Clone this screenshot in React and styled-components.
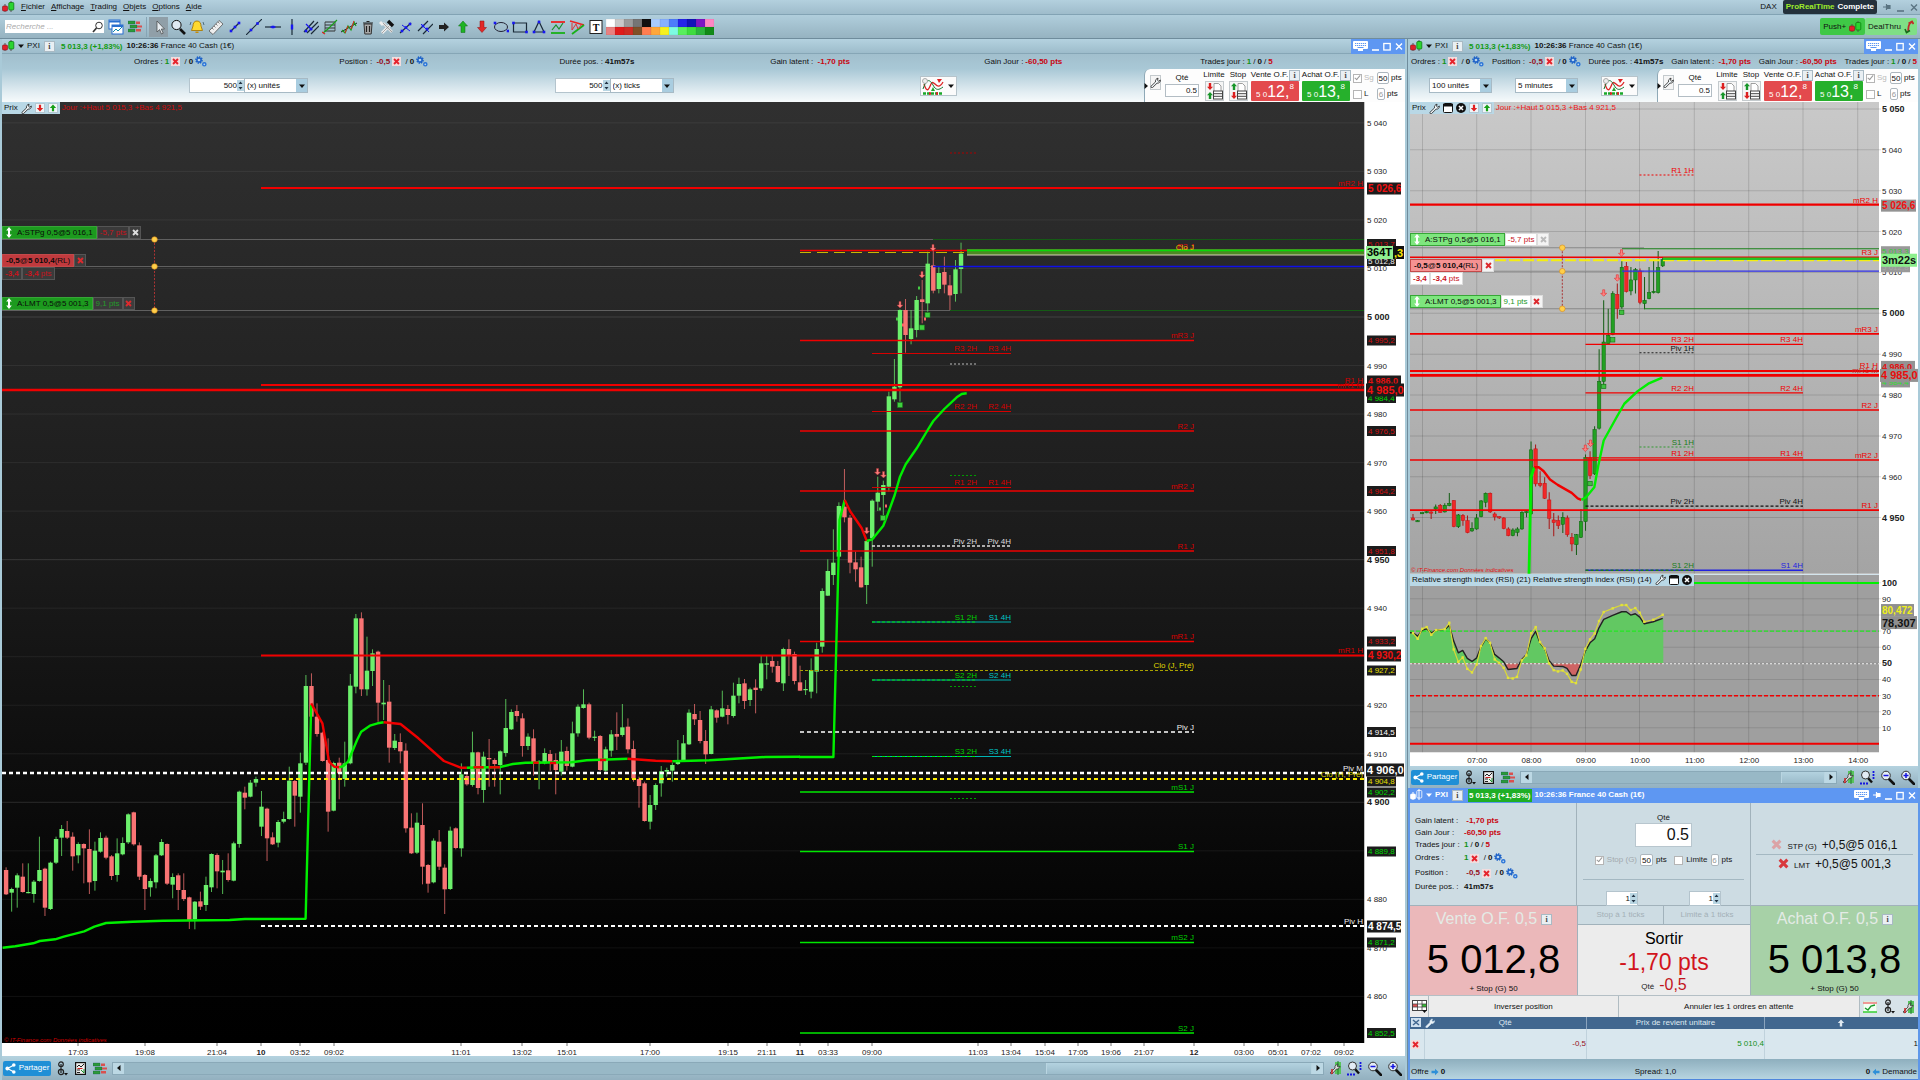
import React from "react";
import styled, { createGlobalStyle, css } from "styled-components";

const Global = createGlobalStyle`
  *, *::before, *::after { box-sizing: border-box; }
  html, body { margin: 0; padding: 0; }
  body { background: #a3c0ce; color: #111; font: 8px/10px "Liberation Sans", Arial, sans-serif; overflow: hidden; }
  button, input, select { font: inherit; color: inherit; margin: 0; padding: 0; border: 0; border-radius: 0; background: none; outline: 0; }
  button { cursor: pointer; }
  svg { display: block; flex: none; }
  b { font-weight: bold; }
`;

/* ---------- shell ---------- */
const Shell = styled.div`display: flex; flex-direction: column; height: 100vh; min-width: 1200px;`;
const MenuBar = styled.header`
  display: flex; align-items: center; flex: none; height: 15px; padding: 0 2px; gap: 6px;
  background: linear-gradient(#b3d0de, #9ebccb); border-bottom: 1px solid #82a3b4;
`;
const MenuItem = styled.button`height: 12px; &::first-letter { text-decoration: underline; }`;
const Spacer = styled.div`flex: 1;`;
const Brand = styled.div`
  display: flex; align-items: center; height: 14px; padding: 0 3px; gap: 3px; font-weight: bold;
  background: #24313c; color: #fff; border-radius: 2px; span { color: #9dea2a; }
`;
const ToolBar = styled.div`
  display: flex; align-items: center; flex: none; height: 24px; padding: 0 3px 0 5px;
  background: linear-gradient(#b0cedc, #96b3c1); border-bottom: 1px solid #6f8c9c;
`;
const Search = styled.label`
  display: flex; align-items: center; width: 99px; height: 13px; background: #fff; margin-right: 2px;
  input { flex: 1; min-width: 0; padding-left: 1px; font-style: italic; }
  input::placeholder { color: #aaa; opacity: 1; }
`;
const Tool = styled.button`
  display: flex; align-items: center; justify-content: center; width: 19px; height: 20px; flex: none;
  background: ${(p) => (p.$on ? "#909fa8" : "none")};
`;
const ToolSep = styled.div`width: 1px; height: 20px; background: #86a5b5; margin: 0 2px;`;
const Palette = styled.div`display: grid; grid-template-columns: repeat(12, 9px); margin-left: 1px; padding: 1px 0;`;
const Swatch = styled.button`height: 8px; background: ${(p) => p.$c}; box-shadow: inset 0 0 1px rgba(0,0,0,.35);`;
const TopAction = styled.button`
  display: flex; align-items: center; justify-content: center; gap: 3px; height: 17px; padding: 0 3px;
  background: ${(p) => p.$c}; border-radius: 2px;
`;

const Workspace = styled.main`
  flex: 1; min-height: 0; display: grid; grid-template-columns: minmax(0, 1fr) 512px; gap: 0 1px; background: #6f8c9c;
`;
const Column = styled.div`display: flex; flex-direction: column; min-width: 0; min-height: 0;`;
const Win = styled.section`
  display: flex; flex-direction: column; min-width: 0; min-height: 0; flex: ${(p) => (p.$grow ? 1 : "none")};
  background: #b3d0de;
  border: solid ${(p) => (p.$active ? "#5e97ea" : "#a9cad8")}; border-width: 0 2px;
`;
const TitleBar = styled.div`
  display: flex; align-items: center; flex: none; height: 15px; gap: 3px;
  background: ${(p) => (p.$active ? "#5e97f2" : "linear-gradient(#b4d2e0, #9dbccb)")};
  color: ${(p) => (p.$active ? "#fff" : "#111")};
  font-weight: ${(p) => (p.$active ? "bold" : "normal")};
  border-bottom: 1px solid ${(p) => (p.$active ? "#5e97f2" : "#86a6b6")};
`;
const Quote = styled.b`
  margin-left: 3px; color: ${(p) => (p.$active ? "#fff" : "#129c12")}; background: ${(p) => (p.$active ? "#1fae25" : "none")};
  line-height: 13px; padding: 0 1px;
`;
const Info = styled.span`
  display: inline-flex; align-items: center; justify-content: center; width: 9px; height: 9px; margin-left: 2px;
  background: #e9eff3; color: #444; font: bold 8px/9px "Liberation Serif", serif; box-shadow: 0 0 0 1px #a9bac4;
`;
const WinCtl = styled.div`
  display: flex; align-items: center; gap: 4px; height: 15px; padding: 0 2px; background: #5e97f2;
`;
const StatusRow = styled.div`
  flex: none; height: 15px; align-items: center; background: linear-gradient(#a1bfcd, #a9c8d6);
  ${(p) => p.$wide
    ? css`display: grid; grid-template-columns: repeat(6, 1fr); padding: 0 62px; justify-items: center;`
    : css`display: flex; justify-content: space-between; padding: 0 1px;`}
`;
const Stat = styled.span`display: flex; align-items: center; gap: 2px; white-space: nowrap;`;
const Tone = styled.b`color: ${(p) => ({ r: "#c80510", g: "#129117", d: "#96101c" })[p.$t]};`;
const SmallBtn = styled.button`
  display: flex; align-items: center; justify-content: center; width: 9px; height: 9px; background: #f2dcdd;
`;

const Controls = styled.div`
  display: flex; flex: none; height: 33px; background: linear-gradient(#a9c8d6, #e2edf2 70%, #f6fafb);
`;
const Pickers = styled.div`
  flex: 1; display: flex; align-items: center; justify-content: space-between; padding: 0 ${(p) => p.$pad}px;
`;
const Group = styled.div`display: flex; gap: 1px; height: 13px;`;
const NumBox = styled.label`
  display: flex; align-items: center; height: 13px; width: ${(p) => p.$w}px; background: #fff; box-shadow: 0 0 0 1px #b4c4cd;
  input { flex: 1; min-width: 0; text-align: right; }
`;
const Pick = styled.label`
  display: flex; align-items: center; height: 13px; width: ${(p) => p.$w}px; background: #fff; box-shadow: 0 0 0 1px #a7bac5;
  select { appearance: none; flex: 1; min-width: 0; padding-left: 2px; }
`;
const PickArrow = styled.span`
  display: flex; align-items: center; justify-content: center; width: 11px; height: 13px; background: #a9cde0; pointer-events: none;
`;
const IndBtn = styled.button`
  display: flex; align-items: center; gap: 3px; width: 35px; height: 18px; background: #fbfbfb; box-shadow: 0 0 0 1px #b7c4cb;
`;

const Trade = styled.div`
  position: relative; display: flex; align-items: flex-end; gap: 3px; flex: none; width: 261px; padding: 0 0 1px 5px; background: #fdfdfd;
  border-left: 1px solid #8fa9b7; border-radius: 6px 0 0 0;
`;
const TradeFold = styled.span`position: absolute; left: -2px; top: 14px;`;
const TCol = styled.div`display: flex; flex-direction: column; align-items: center; gap: 1px; width: ${(p) => p.$w}px;`;
const TLabel = styled.span`display: flex; align-items: center; height: 10px; white-space: nowrap;`;
const QtyInput = styled.input`
  width: 34px; height: 13px; margin-bottom: 4px; text-align: right; padding-right: 1px; background: #fff; border: 1px solid #b3bdc4;
`;
const FaceBtn = styled.button`
  display: flex; align-items: center; justify-content: center; width: ${(p) => p.$w}px; height: ${(p) => p.$h}px;
  background: #f5f5f5; border: 1px solid #c4cacd;
`;
const PriceBtn = styled.button`
  display: flex; align-items: flex-end; justify-content: center; width: 48px; height: 20px; color: #fff; border-radius: 1px;
  background: ${(p) => (p.$sell ? "#e34a4d" : "#26b02c")};
  font-size: 16px; line-height: 18px;
  small { font-size: 8px; line-height: 10px; padding-bottom: 1px; }
  sup { align-self: flex-start; font-size: 8px; line-height: 12px; }
`;
const TOptions = styled.div`display: flex; flex-direction: column; gap: 2px; flex: 1;`;
const TOpt = styled.div`
  display: flex; align-items: center; gap: 2px; height: 14px;
  label { width: 11px; color: ${(p) => (p.$dim ? "#bbb" : "#222")}; }
`;
const Check = styled.input`
  appearance: none; position: relative; width: 9px; height: 9px; background: #fff; border: 1px solid #b5b5b5; flex: none;
  &:checked::after { content: ""; position: absolute; left: 2px; top: -1px; width: 3px; height: 6px; border: solid #999; border-width: 0 1px 1px 0; transform: rotate(40deg); }
`;
const Pts = styled.input`
  width: ${(p) => p.$w}px; height: 12px; text-align: center; background: #fff; border: 1px solid #adb7be; border-radius: 2px;
  color: ${(p) => (p.$dim ? "#999" : "#111")};
`;

/* ---------- chart ---------- */
const ChartArea = styled.div`position: relative; flex: ${(p) => p.$f} 1 0; min-height: 0; background: #fff;`;
const ChartSvg = styled.svg`width: 100%; height: 100%; font-family: "Liberation Sans", Arial, sans-serif; font-size: 8px;`;
const Txt = styled.text`
  fill: ${(p) => p.$c || "#222"}; font-size: ${(p) => p.$s || 8}px; font-weight: ${(p) => (p.$b ? "bold" : "normal")};
`;
const Legend = styled.div`
  position: absolute; left: 0; top: 0; display: flex; align-items: center; height: 12px; gap: 3px; background: #b9d8e6; padding: 0 2px;
`;
const LegendNote = styled.span`position: absolute; left: 100%; padding-left: 2px; white-space: nowrap; color: ${(p) => p.$c};`;
const Tag = styled.div`
  position: absolute; left: 0; top: ${(p) => p.$y}px; display: flex; align-items: center; height: 13px; white-space: nowrap;
`;
const TagMain = styled.span`
  display: flex; align-items: center; gap: 5px; height: 13px; padding: 0 3px;
  background: ${(p) => (p.$red ? (p.$dark ? "#c13a3e" : "#f59292") : p.$dark ? "#1c9a1e" : "#7ee67e")};
  border: 1px solid ${(p) => (p.$red ? "#c34a4a" : "#37a637")}; color: #0a0a0a;
`;
const TagSide = styled.span`
  height: 13px; line-height: 11px; padding: 0 2px; border: 1px solid ${(p) => (p.$dark ? "#555" : "#ddd")};
  background: ${(p) => (p.$dark ? "#3a3a3a" : "#fff")}; color: ${(p) => p.$c};
`;
const TagX = styled.button`
  display: flex; align-items: center; justify-content: center; width: 12px; height: 13px;
  background: ${(p) => (p.$dark ? "#3d3d3d" : "#f4f4f4")}; border: 1px solid ${(p) => (p.$dark ? "#555" : "#ddd")};
`;

const BottomBar = styled.div`
  display: flex; align-items: center; flex: none; height: ${(p) => p.$h}px; gap: 5px; padding: 0 3px 0 1px;
  background: linear-gradient(#b4d2df, #93b0bf);
`;
const Share = styled.button`
  display: flex; align-items: center; justify-content: center; gap: 3px; width: 48px; height: 15px; color: #fff; background: #1f8fd6; border-radius: 2px;
`;
const Scroll = styled.div`flex: 1; display: flex; height: 13px; background: #98b8c6; border: 1px solid #8aa9b8;`;
const ScrollBtn = styled.button`display: flex; align-items: center; justify-content: center; width: 11px; background: #bcd8e4;`;
const Thumb = styled.div`
  margin-left: auto; width: ${(p) => p.$w}; background: linear-gradient(#b3d2df, #9cbccb); border: 1px solid #b9d5e1; border-width: 0 1px;
`;

/* ---------- order window ---------- */
const OrderTop = styled.div`display: grid; grid-template-columns: 168fr 175fr 168fr; height: 103px; background: #cddce3;`;
const Pane = styled.div`border-right: 1px solid #a1b2bb; border-bottom: 1px solid #a1b2bb;`;
const StatList = styled(Pane)`
  display: grid; grid-template-columns: 45px 1fr; align-content: center; align-items: center; padding: 0 5px; gap: 0 4px;
  grid-template-rows: 12px 12px 12px 15px 15px 13px;
`;
const QtyPane = styled(Pane)`display: flex; flex-direction: column; align-items: center; padding: 10px 6px 0;`;
const BigQty = styled.input`width: 57px; height: 24px; font-size: 16px; text-align: right; padding-right: 2px; background: #fff; border: 1px solid #b8c6ce;`;
const LimitRow = styled.div`display: flex; align-items: center; justify-content: center; gap: 3px; height: 26px; width: 100%;`;
const OptLabel = styled.label`color: ${(p) => (p.$dim ? "#a3a9ad" : "#222")};`;
const Rule = styled.hr`width: 100%; height: 1px; margin: ${(p) => p.$m}px 0; border: 0; background: #a4b8c2;`;
const StepRow = styled.div`display: flex; justify-content: space-between; width: 100%; padding: 6px 24px 0;`;
const Pending = styled(Pane)`display: flex; flex-direction: column; justify-content: center; padding: 0 5px; border-right: 0;`;
const PendRow = styled.div`
  display: flex; align-items: center; justify-content: center; gap: 5px; height: 18px; font-size: 12px; line-height: 16px;
  small { font-size: 8px; padding-top: 4px; }
`;
const DealRow = styled.div`display: grid; grid-template-columns: 168fr 175fr 168fr; height: 89px;`;
const Deal = styled.button`
  display: flex; flex-direction: column; align-items: center; justify-content: space-between; padding: 5px 0 1px;
  background: ${(p) => (p.$sell ? "#ebb8ba" : "#a7d1a7")};
`;
const DealHead = styled.span`display: flex; align-items: center; gap: 3px; font-size: 16px; line-height: 16px; color: #e4ebe6;`;
const DealPrice = styled.span`font-size: 40px; line-height: 44px; padding-top: 6px; color: #000;`;
const Mid = styled.div`display: flex; flex-direction: column; border: solid #a1b2bb; border-width: 0 1px;`;
const Ticks = styled.div`display: grid; grid-template-columns: 1fr 1fr; height: 19px; background: #cddce3; border-bottom: 1px solid #a1b2bb;`;
const TickBtn = styled.button`color: #a3b0b7; &:first-child { border-right: 1px solid #a1b2bb; }`;
const Exit = styled.button`
  flex: 1; display: flex; flex-direction: column; align-items: center; justify-content: space-between; background: #ececec; padding: 5px 0 1px;
  font-size: 16px; line-height: 18px; color: #000;
  strong { font-weight: normal; font-size: 23px; line-height: 26px; color: #d2141c; }
  em { display: flex; align-items: center; gap: 5px; font-style: normal; line-height: 14px; color: #c2141c; }
  small { font-size: 8px; color: #222; padding-top: 5px; }
`;
const Actions = styled.div`
  display: grid; grid-template-columns: 19px 190fr 242fr 58px; height: 22px; background: #ececec; border-top: 1px solid #b4bfc5;
`;
const Action = styled.button`border-right: 1px solid #b0bcc2; display: flex; align-items: center; justify-content: center;`;
const ActIcons = styled.div`display: flex; align-items: center; justify-content: space-around; background: #d7e3e9;`;
const Grid = styled.table`
  width: 100%; border-collapse: collapse; table-layout: fixed; background: #d9e7ee;
  th { height: 12px; padding: 0; background: #41678f; color: #dfe9f1; font-weight: normal; border-right: 1px solid #8aa3bd; }
  td { height: 30px; padding: 0; text-align: right; border-right: 1px solid #c0d2dc; }
  th:first-child { border-right-color: #41678f; }
  th:last-child, td:last-child { border-right: 0; }
`;
const Col = styled.col`width: ${(p) => p.$w};`;
const Tools = styled.span`display: flex; gap: 3px; padding-left: 1px;`;
const TitleIcon = styled.span`display: flex; justify-content: center;`;
const Foot = styled.footer`
  display: flex; align-items: flex-end; justify-content: space-between; height: 21px; padding: 0 1px 2px; background: linear-gradient(#8eafbe, #b7d4e0);
  border-bottom: 1px solid #4f86dc;
`;

/* ---------- icons ---------- */
const Candles = ({ c }) => (
  <svg width="13" height="12" viewBox="0 0 13 12">
    <path d="M3 3v8M9 0v11" stroke={c || "#555"} />
    <rect x=".5" y="5" width="5" height="5" rx="1" fill={c || "#e0202c"} stroke={c || "#8c1018"} strokeWidth=".6" />
    <rect x="6.8" y="1.5" width="5" height="7.5" rx="1" fill={c ? "none" : "#2bd42f"} stroke={c || "#0d7d12"} strokeWidth=".8" />
  </svg>
);
const Caret = ({ c = "#111", r = 0 }) => (
  <svg width="6" height="6" viewBox="0 0 6 6"><path d="M0 1.5h6L3 5z" fill={c} transform={`rotate(${r} 3 3)`} /></svg>
);
const Cross = ({ c = "#e5232c", s = 7 }) => (
  <svg width={s} height={s} viewBox="0 0 8 8"><path d="M1.2 1.2l5.6 5.6M6.8 1.2L1.2 6.8" stroke={c} strokeWidth="2.2" /></svg>
);
const Gears = () => (
  <svg width="12" height="11" viewBox="0 0 12 11">
    <circle cx="4" cy="4" r="3" fill="none" stroke="#1d62c8" strokeWidth="1.6" strokeDasharray="1.4 .9" />
    <circle cx="4" cy="4" r="2.1" fill="#b7d4ee" stroke="#1d62c8" strokeWidth="1.5" />
    <circle cx="9.3" cy="8.3" r="1.6" fill="#b7d4ee" stroke="#2a74d8" strokeWidth="1.4" />
  </svg>
);
const Wrench = ({ c = "#222", f = "#eef4f7", s = 11 }) => (
  <svg width={s} height={s} viewBox="0 0 12 12">
    <path d="M1 10.2L6 5.4C5.5 3.5 6.8 1.5 8.8 1.3L8.2 3.6L9.5 4.6L11.3 3.3C11.5 5.5 9.8 7 7.7 6.7L2.8 11.5C1.5 12 .5 11.2 1 10.2z" fill={f} stroke={c} strokeWidth=".9" />
  </svg>
);
const Spinner = () => (
  <svg width="7" height="11" viewBox="0 0 7 11"><rect width="7" height="11" fill="#b9d6e3" /><path d="M1.5 4L3.5 1.5L5.5 4zM1.5 7L3.5 9.5L5.5 7z" fill="#234" /></svg>
);
const Arrow = ({ c, r = 0, s = 8 }) => (
  <svg width={s} height={s} viewBox="0 0 8 8"><path d="M4 .5L7.2 4H5.2V7.5H2.8V4H.8z" fill={c} transform={`rotate(${r} 4 4)`} /></svg>
);
const ArrowBox = ({ c, r }) => (
  <svg width="10" height="10" viewBox="0 0 10 10"><rect x=".5" y=".5" width="9" height="9" fill="#f0f5f8" stroke="#b3c7d1" /><path d="M5 1.6L8.2 5H6.1V8.2H3.9V5H1.8z" fill={c} transform={`rotate(${r} 5 5)`} /></svg>
);
const UpDown = () => (
  <svg width="6" height="11" viewBox="0 0 6 11"><path d="M3 0L5.8 3.5H4V7.5H5.8L3 11L.2 7.5H2V3.5H.2z" fill="#fff" /></svg>
);
const Box = () => (
  <svg width="10" height="10" viewBox="0 0 10 10"><rect x=".5" y=".5" width="9" height="9" rx="1" fill="#fff" stroke="#111" /><path d="M0 1h10v2.5H0z" fill="#111" /></svg>
);
const CloseDot = () => (
  <svg width="10" height="10" viewBox="0 0 10 10"><circle cx="5" cy="5" r="5" fill="#111" /><path d="M3 3l4 4M7 3L3 7" stroke="#fff" strokeWidth="1.6" /></svg>
);
const Indicator = ({ w = 24 }) => (
  <svg width={w} height="18" viewBox="0 0 24 18">
    <path d="M3 7C6 17 8 12 10 7C13 1 16 16 22 5" fill="none" stroke="#d22" strokeWidth="1.3" />
    <path d="M2 12C6 0 9 3 12 8C15 14 18 13 22 10" fill="none" stroke="#173" strokeWidth="1" />
    <path d="M2 16.5h20" stroke="#1ba82a" strokeWidth="2.5" strokeDasharray="3 1" />
    <path d="M8 16.5h2M15 16.5h2" stroke="#d22" strokeWidth="2.5" />
    <path d="M16 2l2 4 3-4z" fill="#d22" /><path d="M10 14l2-4 2 4z" fill="#1ba82a" />
    <circle cx="4" cy="4" r="2.5" fill="#eee" stroke="#999" strokeWidth=".8" />
  </svg>
);
const OrderIcon = ({ flip }) => (
  <svg width="17" height="18" viewBox="0 0 17 18">
    <path d="M8 1.5h4.5L15 4v9H8z" fill="#fff" stroke="#888" strokeWidth=".8" />
    <rect x="7.5" y="9" width="9" height="8" fill="#fff" stroke="#444" /><path d="M7.5 11.7h9M7.5 14.3h9" stroke="#444" />
    <path d={flip ? "M4 1L7 4.2H5.2V8H2.8V4.2H1z" : "M4 8L1 4.8H2.8V1H5.2V4.8H7z"} fill={flip ? "#18962a" : "#dc2020"} />
    <path d={flip ? "M4 17L1 13.8H2.8V10H5.2V13.8H7z" : "M4 10L7 13.2H5.2V17H2.8V13.2H1z"} fill={flip ? "#dc2020" : "#18962a"} />
  </svg>
);
const Keyboard = () => (
  <svg width="15" height="10" viewBox="0 0 15 10"><rect width="15" height="8" rx="1" fill="#fff" /><path d="M2 2.5h11M2 4.5h11" stroke="#5e97f2" strokeDasharray="1.3 .7" /><path d="M4.5 6.5h6" stroke="#5e97f2" /><path d="M5 8h5v2H5z" fill="#fff" /></svg>
);
const Mini = ({ c = "#fff" }) => (<svg width="7" height="9" viewBox="0 0 7 9"><path d="M0 8h7" stroke={c} strokeWidth="1.6" /></svg>);
const Maxi = () => (<svg width="8" height="9" viewBox="0 0 8 9"><rect x=".8" y="1.5" width="6.4" height="6.5" fill="none" stroke="#fff" strokeWidth="1.3" /></svg>);
const XLine = ({ c = "#fff" }) => (<svg width="8" height="9" viewBox="0 0 8 9"><path d="M1 1.5l6 6M7 1.5l-6 6" stroke={c} strokeWidth="1.4" /></svg>);
const Pin = ({ c = "#fff" }) => (<svg width="8" height="8" viewBox="0 0 8 8"><path d="M0 4h3M3.5 1v6M4 2.5h3v3H4z" stroke={c} fill={c} strokeWidth="1.2" /></svg>);
const Lens = ({ sign }) => (
  <svg width="15" height="15" viewBox="0 0 15 15">
    <path d="M9 9l5 5" stroke="#111" strokeWidth="2.6" strokeLinecap="round" />
    <circle cx="6" cy="5.5" r="4.3" fill="#e3ecf5" stroke="#333" strokeWidth="1" />
    <path d={sign === "+" ? "M3.5 5.5h5M6 3v5" : "M3.5 5.5h5"} stroke="#1515e0" strokeWidth="1.5" />
  </svg>
);
const LensFit = () => (
  <svg width="15" height="15" viewBox="0 0 15 15">
    <path d="M8 8l4 4.5" stroke="#111" strokeWidth="2.4" /><circle cx="5.5" cy="5" r="4" fill="#e3ecf5" stroke="#333" />
    <path d="M0 13.5h8M13.5 1v8" stroke="#1515e0" strokeWidth="1.8" strokeDasharray="2 1" />
  </svg>
);
const ChainIcon = () => (
  <svg width="12" height="15" viewBox="0 0 12 15"><g fill="none" stroke="#222" strokeWidth="1.2"><circle cx="5" cy="3.2" r="2.3" /><circle cx="5" cy="11" r="2.6" /><path d="M5 3v9" /></g><path d="M8 12h4l-2 2.5z" fill="#111" /></svg>
);
const ReportIcon = () => (
  <svg width="15" height="13" viewBox="-2 0 15 13"><rect x=".6" y=".6" width="9.8" height="11.8" fill="#eee" stroke="#111" strokeWidth="1.2" /><path d="M2 5l2-2 2 2 3-3M2 8h3M2 10.5h3" stroke="#222" fill="none" /><path d="M6 8l3 3M9 7v4" stroke="#1a8f2a" /><path d="M2.5 6.500h5" stroke="#c22" /></svg>
);
const BookIcon = () => (
  <svg width="14" height="13" viewBox="0 0 14 13"><path d="M0 1h7v3H0zM2 5h7v3H2zM0 9h7v3H0z" fill="#2c9a38" stroke="#145" strokeWidth=".3" /><path d="M8 1.5h4v2.5H8zM9 5.5h5v2H9zM8 9h5v2.5H8z" fill="#d9504f" /></svg>
);
const WrenchChart = () => (
  <svg width="13" height="14" viewBox="0 0 13 14"><path d="M6 1h6v12H6z" fill="#58c45c" /><path d="M9 0v14" stroke="#1d7c26" /><path d="M1 12l5-5c-.5-2 1-4 3-4L8 5l1.500 1L11 5c0 2-1.500 3.500-3.500 3L3 13z" fill="#ddd" stroke="#333" strokeWidth=".8" /><path d="M3 8v5" stroke="#c22" strokeWidth="1.5" /></svg>
);
const ShareIcon = () => (
  <svg width="11" height="11" viewBox="0 0 11 11"><path d="M9 2L2.5 5.5L9 9" stroke="#fff" strokeWidth="1.2" fill="none" /><circle cx="8.8" cy="2" r="1.8" fill="#fff" /><circle cx="2.3" cy="5.5" r="1.9" fill="#fff" /><circle cx="8.8" cy="9" r="1.8" fill="#fff" /></svg>
);

const P = (d, c = "#1a2a38", w = 1.2, f = "none") => <path d={d} stroke={c} strokeWidth={w} fill={f} />;
const dots = (...list) => list.map(([x, y], i) => <rect key={i} x={x - 1.3} y={y - 1.3} width="2.6" height="2.6" fill="#1818f0" />);
const TOOLS = [
  ["Pointeur", <path d="M6 2v11l2.600-2.400L10.500 15l1.700-.8-1.900-4.200H13.500z" fill="#e8eef2" stroke="#444" strokeWidth=".7" />],
  ["Loupe", <>{P("M10 10l5 5", "#111", 2.6)}<circle cx="6.5" cy="6" r="4.6" fill="#dfe9f2" stroke="#111" /></>],
  ["Alarme", <><path d="M8 2c-3 0-4 2.500-4 5l-1.500 4.500h11L12 7c0-2.500-1-5-4-5z" fill="#ffd92e" stroke="#a97a08" strokeWidth=".9" /><path d="M6.500 12.500h3v1.500h-3z" fill="#c48b0b" />{P("M2 3L1 6M14 3l1 3", "#36566a", 0.8)}</>],
  ["Règle", <><path d="M1 12L11 1.500L15 5L5 15.500z" fill="#eee" stroke="#555" strokeWidth=".8" />{P("M4 9l1.500 1.500M6 7l1.500 1.500M8 5l1.500 1.500M10 3l1.500 1.500", "#666", 0.8)}</>],
  ["Segment", <>{P("M4 12L12 4")}{dots([4, 12], [8, 8], [12, 4])}</>],
  ["Droite", <>{P("M0 16L16 0")}{dots([5, 11], [11.5, 4.5])}</>],
  ["Horizontale", <>{P("M0 8h16")}{dots([8, 8])}{P("M5.500 8h5", "#1818f0", 1.6)}</>],
  ["Verticale", <>{P("M8 0v16")}{P("M8 5.500v5", "#1818f0", 2.4)}</>],
  ["Fourche", <>{P("M1 13L11 2M4 14L15 3M8 15L16 7")}{P("M3 5l6 6", "#1818f0")}{dots([3, 12], [8, 10])}</>],
  ["Fibonacci", <>{P("M3 3h10M3 6h10M3 9h10M3 12h10", "#333", 1)}{P("M3 3v9M13 3v9", "#333", 0.8)}{P("M1 14L6 10L15 1", "#18a018", 1.2)}{P("M0 13l3 2", "#d22", 1.2)}</>],
  ["Tendance", <>{P("M0 13L16 4", "#222", 1)}{P("M1 11l3 3 3-7 3 4 3-8 2 4", "#18a018", 1.2)}{P("M4 14l3-7M10 10l3-8", "#d22", 1)}</>],
  ["Supprimer", <><path d="M4 5h8l-.8 10H4.800z" fill="#aaa" stroke="#333" />{P("M3 4h10M6.500 2.500h3M6.500 7v6M9.500 7v6", "#222", 1.2)}</>],
  ["Outils", <>{P("M3 14L11 6", "#eee", 3)}{P("M4 4l9 9", "#ddd", 2.6)}{P("M9 2l5 5", "#111", 3.4)}{P("M1 3l3 3", "#eee", 3)}{P("M3 14L11 6M4 4l9 9", "#777", 0.6)}</>],
  ["Tracé", <>{P("M2 14L13 4")}{P("M4 6l8 6", "#1818f0", 1)}{dots([4, 12], [8, 8.5], [12, 5])}</>],
  ["Canal", <>{P("M1 12L11 2M6 15L16 5")}{P("M4 5l8 8", "#1818f0", 1)}{dots([6, 7], [10, 10])}</>],
  ["Flèche droite", <path d="M3 6h5V3.500L13 8L8 12.500V10H3z" fill="#222" />],
  ["Flèche haut", <path d="M8 2L12.500 7H10v6.500H6V7H3.500z" fill="#1eb324" stroke="#0c6d12" strokeWidth=".5" />],
  ["Flèche bas", <path d="M8 13.500L12.500 8.500H10V2H6v6.500H3.500z" fill="#e22828" stroke="#8a1212" strokeWidth=".5" />],
  ["Ellipse", <><ellipse cx="8" cy="8" rx="6.5" ry="4.5" fill="none" stroke="#223" />{dots([2, 4], [15, 12])}</>],
  ["Rectangle", <>{P("M1.500 4h13v9h-13z")}{dots([1.5, 4], [14.5, 13])}</>],
  ["Triangle", <>{P("M8 2.500L13 13H3z")}{dots([8, 3], [13, 13], [3, 13])}</>],
  ["Figure", <>{P("M1 3h14", "#e22", 1.8)}{P("M1 14h14", "#18b018", 1.8)}{P("M2 11l4-5 3 4 4-6", "#18902a", 1.2)}</>],
  ["Biseau", <>{P("M1 2l14 4", "#e22", 1.8)}{P("M3 15L15 6", "#18b018", 1.8)}{P("M3 4v7l4-6 2 5 4-5", "#d33", 1)}</>],
  ["Texte", <><rect x="2" y="1.5" width="12" height="13" fill="#fff" stroke="#222" /><text x="8" y="11.5" textAnchor="middle" fontSize="10" fontWeight="bold" fontFamily="Liberation Serif, serif">T</text></>],
];
const COLORS = [
  "#ffffff", "#c9c9c9", "#9b9b9b", "#757575", "#101010", "#a9ccff", "#86b0ff", "#4d7dfa", "#2424e8", "#1212b8", "#7e14c4", "#ff86c4",
  "#e98080", "#e01c1c", "#cf2c24", "#7f5028", "#ff7d50", "#ffa73c", "#f6f01e", "#7dfbe2", "#58ef5c", "#3edc3e", "#2cb43c", "#128a18",
];

/* ---------- series ---------- */
const MAIN = `r862 870 943 945;g923 927 938 995;g880 886 923 983;r850 890 936 938;g850 936 938 940;g900 905 942 968;g770 870 903 905;r863 866 983 1008;g845 848 987 990;g770 777 848 852;g735 747 773 828;r723 753 773 777;r757 770 829 872;g787 792 826 850;r790 792 805 910;r748 807 907 942;g785 812 903 932;g757 774 815 818;r767 773 833 838;r825 829 888 900;g775 820 885 905;g772 789 823 826;g700 703 787 792;r695 697 793 797;r787 796 890 900;r882 885 927 990;g895 903 922 950;g822 826 907 925;g777 786 826 828;r790 792 911 915;g880 891 914 955;r880 886 930 990;r880 930 957 963;r950 952 1020 1047;g963 965 1018 1048;r935 964 980 990;g890 915 975 993;g820 822 922 936;r820 825 874 925;g840 872 877 942;r820 871 900 905;g785 790 902 904;g632 635 792 803;r620 638 653 688;g600 608 650 652;g590 597 608 620;g633 680 740 768;r683 686 775 843;r757 772 793 795;g720 726 788 802;g695 717 725 730;g560 602 717 719;r600 603 647 740;g518 550 650 698;g285 318 548 555;r280 318 410 412;r370 410 462 470;r455 458 543 545;r475 540 695 755;g545 549 692 694;r533 548 580 658;g485 550 597 620;g282 317 550 553;g102 115 320 340;r97 115 328 348;g170 272 328 347;g208 220 273 318;r212 215 368 425;g300 368 373 420;r315 365 503 548;g462 482 504 510;r460 486 514 550;r490 512 745 758;r700 743 820 822;g698 728 818 822;r670 735 860 913;r852 855 911 938;g775 782 907 910;r750 785 860 870;r853 863 928 1002;g740 752 927 930;r742 745 804 808;g550 583 805 830;r575 588 613 617;g455 517 615 620;r515 517 624 643;g515 530 630 668;r477 534 538 620;r535 540 552 620;g511 514 555 643;g357 444 519 530;g388 396 448 450;r375 393 408 425;r400 415 498 530;g460 470 498 510;r448 475 547 587;g540 545 550 628;g505 519 550 553;r510 522 548 572;r520 540 570 643;g480 515 575 587;r500 513 558 572;g425 460 560 562;g373 380 460 470;g328 373 384 386;r368 373 473 478;g452 470 473 483;r465 468 570 573;g500 508 572 575;g450 463 512 530;r397 462 470 510;g372 442 465 470;r415 440 508 520;r482 507 595 605;r590 597 618 683;r605 610 723 725;g645 675 725 748;g610 615 675 690;g558 574 610 650;g563 570 575 590;g548 555 572 605;g480 540 552 555;g465 490 540 543;g388 398 493 495;r372 402 418 435;r393 420 483 490;r450 483 523 552;g378 388 522 523;r388 391 413 428;g332 385 410 412;r375 387 405 433;g308 347 408 413;g293 312 347 370;r297 310 363 387;g323 328 360 378;r298 323 330 400;g225 250 325 333;g225 250 254 298;r228 243 260 278;r243 258 306 308;g203 207 310 333;r178 207 225 288;r215 222 303 313;r257 307 332 333;g300 327 330 345;g235 270 335 355;g188 207 275 340;g25 33 200 218;g-62 -27 47 48;g-152 -52 -15 15;g-233 -222 -70 -65;r-333 -220 -188 -173;r-195 -187 -52 -20;r-85 -53 -32 5;r-70 -38 22 23;g-120 -117 15 72;g-242 -238 -125 -40;g-310 -262 -235 -207;g-298 -285 -255 -195;g-565 -551 -280 -265;g-663 -580 -542 -535;g-812 -810 -578 -535;r-843 -810 -735 -682;g-810 -755 -723 -707;g-852 -840 -750 -728;r-900 -842 -834 -770;g-985 -949 -830 -805;r-990 -944 -868 -860;g-940 -921 -873 -860;r-970 -924 -886 -860;r-915 -884 -854 -810;g-960 -932 -858 -835;g-1012 -979 -933 -860`;
const SIDE = `r850 862 868 870;g868 870 872 872;g846 846 848 850;g840 843 846 848;r842 844 847 865;g822 829 835 850;r820 824 846 846;g818 824 844 846;g787 818 825 827;r808 810 888 890;g850 853 888 892;r850 854 870 885;r855 870 906 908;g875 893 901 903;g850 862 895 897;g808 811 858 860;g786 788 815 830;r786 788 844 847;r845 850 859 870;r857 858 862 865;r860 862 894 896;r890 895 915 917;g893 898 915 917;g890 895 905 917;g842 845 895 897;g842 843 846 860;g633 658 850 852;r642 655 760 768;r722 758 764 770;r740 758 803 805;r785 808 863 895;r847 868 876 917;r855 870 885 895;g845 860 881 907;r855 862 912 918;r907 920 940 962;g910 912 942 973;g835 873 920 922;g672 681 873 900;r662 682 735 745;g587 597 730 733;g357 453 593 597;g210 335 453 470;g235 315 340 340;g183 190 313 315;r160 192 235 265;g92 111 230 235;r95 108 184 187;g110 149 182 195;g113 118 149 190;r115 122 216 222;g140 210 220 237;g110 187 205 207;g90 183 187 190;g62 112 187 190;g82 88 107 110`;
const parse = (s, x0, dx, y0) =>
  s.split(";").map((t, i) => {
    const v = t.slice(1).split(" ").map((n) => y0 + Number(n) / 3);
    return { up: t[0] === "g", x: x0 + dx * i, hi: v[0], top: v[1], bot: v[2], lo: v[3] };
  });
const mainBars = parse(MAIN, 6.1, 5.552, 580);
const sideBars = parse(SIDE, 1412, 4.54, 230);
const pts = (s, sx, x0, y0) => s.split(" ").map((p) => { const [x, y] = p.split(","); return `${(x0 + x / sx).toFixed(1)},${(y0 + y / 3).toFixed(1)}`; }).join(" ");
const m7 = (s) => pts(s, 1.96, 0, 580);
const s8 = (s) => pts(s, 3, 1400, 230);
const r9 = (s) => pts(s, 3, 1400, 560);

const Bars = ({ data, w, up, down, edge }) =>
  data.map((b, i) => {
    const c = b.up ? up : down;
    return (
      <g key={i}>
        <path d={`M${b.x} ${b.hi}V${b.lo}`} stroke={edge ? (b.up ? "#125c12" : "#a81414") : c} strokeWidth="1" opacity={edge ? 1 : 0.75} />
        <rect x={b.x - w / 2} y={b.top} width={w} height={Math.max(1.2, b.bot - b.top)} fill={c} stroke={edge ? (b.up ? "#0b600b" : "#c01212") : "none"} strokeWidth=".5" />
      </g>
    );
  });
const Line = ({ x1, x2, y, c, w = 1.4, d, o }) => <path d={`M${x1} ${y}H${x2}`} stroke={c} strokeWidth={w} strokeDasharray={d} opacity={o} />;
const Poly = ({ p, c, w = 2.4 }) => <polyline points={p} fill="none" stroke={c} strokeWidth={w} strokeLinejoin="round" />;
const Mark = ({ x, y, c, s }) => <path d={`M${x - 1} ${y - 3.5}h2v3.5h2L${x} ${y + 3}L${x - 3} ${y}h2z`} fill={c} stroke={s} strokeWidth=".5" />;
const Dots = ({ x, ys }) => (
  <g><path d={`M${x} ${ys[0]}V${ys[2]}`} stroke="#a33" strokeDasharray="2 1.500" />{ys.map((y) => <circle key={y} cx={x} cy={y} r="2.8" fill="#ffcf4a" stroke="#d88a18" strokeWidth=".6" />)}</g>
);
const Plate = ({ x, y, t, c, s = 8, b, bg = "#1c1c1c", w }) => (
  <g><rect x={x} y={y - s / 2 - 1} width={w} height={s + 2} fill={bg} /><Txt x={x + 1} y={y + s * 0.36} $c={c} $s={s} $b={b}>{t}</Txt></g>
);

const R = "#f00000", G = "#00e800", MA = "#00ef00";
const label = (p) => `${Math.floor(p / 1000)} ${String(p % 1000).padStart(3, "0")}`;
const my = (p) => 317 + (5000 - p) * 4.853;
const MainChart = () => (
  <ChartSvg viewBox="2 102 1403 954" preserveAspectRatio="none" role="img" aria-label="Graphique PXI 500 ticks">
    <defs><linearGradient id="bg1" x1="0" y1="0" x2="0" y2="1"><stop offset="0" stopColor="#303030" /><stop offset=".5" stopColor="#1a1a1a" /><stop offset=".9" stopColor="#020202" /><stop offset="1" stopColor="#000" /></linearGradient></defs>
    <rect x="2" y="102" width="1403" height="954" fill="#fff" />
    <rect x="2" y="102" width="1362" height="941" fill="url(#bg1)" />
    {Array.from({ length: 19 }, (_, i) => 4860 + i * 10).map((p) => <Line key={p} x1={2} x2={1364} y={my(p)} c="#fff" w={1} o={p % 50 ? 0.06 : 0.12} />)}
    <Line x1={2} x2={933} y={239.5} c="#606060" w={1} /><Line x1={2} x2={933} y={266.5} c="#606060" w={1} /><Line x1={2} x2={950} y={310.5} c="#606060" w={1} />
    <Line x1={933} x2={1364} y={239.5} c="#155a15" w={1} /><Line x1={950} x2={1364} y={310.5} c="#155a15" w={1} />
    <Bars data={mainBars} w={4.4} up="#6cf06c" down="#f97474" />
    {[188, 655.5].map((y) => <Line key={y} x1={261} x2={1364} y={y} c={R} w={2} />)}
    <Line x1={261} x2={1364} y={385} c={R} w={2} /><Line x1={2} x2={1364} y={390} c={R} w={2.4} />
    {[250.5, 340.5, 431, 491, 551, 641.5].map((y) => <Line key={y} x1={800} x2={1194} y={y} c={R} w={1.6} />)}
    <Line x1={800} x2={1194} y={252.5} c="#c9b800" w={1.2} d="11 6" />
    {[792, 851.5, 942.5, 1033].map((y) => <Line key={y} x1={800} x2={1194} y={y} c={G} w={1.6} />)}
    {[353.5, 411.5, 487.5].map((y) => <Line key={y} x1={872} x2={1011} y={y} c="#d80000" w={1} />)}
    {[622, 680, 756.5].map((y) => <g key={y}><Line x1={872} x2={1011} y={y} c="#00b4b4" w={1.2} /><Line x1={872} x2={977} y={y} c={G} w={1.2} d="3 2" /></g>)}
    <Line x1={872} x2={1011} y={546} c="#ddd" w={1.3} d="3 2" />
    <Line x1={950} x2={976} y={364} c="#bbb" w={1} d="2 2" /><Line x1={950} x2={976} y={153} c="#a00" w={1} d="2 2" />
    {[475.5, 686.5, 798.5].map((y) => <Line key={y} x1={950} x2={976} y={y} c="#090" w={1} d="2 2" />)}
    <Line x1={800} x2={1194} y={670.5} c="#a9a200" w={1} d="3 2" /><Line x1={800} x2={1194} y={732} c="#fff" w={1.6} d="4 3" />
    <Line x1={2} x2={1364} y={773} c="#fff" w={2.6} d="4 3" /><Line x1={261} x2={1364} y={779} c="#ffee00" w={2.2} d="4 3" /><Line x1={261} x2={1364} y={926} c="#fff" w={2} d="4 3" />
    <rect x="967" y="249" width="397" height="6" fill="#4d8a24" /><Line x1={967} x2={1364} y={250.5} c="#08d808" w={1.4} /><Line x1={967} x2={1364} y={255} c="#d8cdb8" w={1.2} /><Line x1={933} x2={1364} y={266.5} c="#1010e8" w={1.3} />
    <Poly c={MA} p={m7("5,1103 30,1099 65,1090 78,1083 108,1078 125,1070 165,1054 185,1040 208,1029 260,1025 320,1022 450,1020 480,1017 599,1016 610,375")} />
    <Poly c={R} p={m7("610,370 632,430 645,545 655,560 665,562")} />
    <Poly c={MA} p={m7("665,562 673,558 682,545 700,480 708,455 725,437 740,430 752,427")} />
    <Poly c={R} p={m7("752,427 785,432 820,475 870,543 903,563 915,563")} />
    <Poly c={MA} p={m7("915,563 980,561 1005,552 1030,548 1120,547 1150,541 1230,536")} />
    {["928,562 948,562", "958,562 980,562", "1045,548 1056,548", "1078,549 1090,549", "1176,540 1188,540", "1230,536 1285,542 1318,544"].map((s) => <Poly key={s} c={R} p={m7(s)} />)}
    <Poly c={MA} p={m7("1318,544 1390,541 1440,536 1500,531 1568,530")} />
    <Poly c={MA} p="799,757 833.4,757 838,580 839.5,520 844.7,500" />
    <Poly c={R} p="844.7,500 850,511 861.6,528 866.8,541" />
    <Poly c={MA} p="866.7,541 872.3,539.3 883.3,525.7 889.3,510 894.7,495 900,476.7 905.7,464.3 916.7,448.3 927.7,430 933.3,421 944.3,409 956.7,397.3 961.7,394 966.7,393.3" />
    {[[866.7, 531], [877.5, 472], [883.5, 475], [900, 305], [922, 275], [933, 248]].map(([x, y]) => <Mark key={x} x={x} y={y} c="#fb7c7c" s="#a33" />)}
    {[[883, 518], [900, 405], [922, 327.5], [927.5, 315]].map(([x, y]) => <rect key={x} x={x - 2.5} y={y - 2.5} width="5" height="5" fill="#3fd03f" stroke="#1b7c1b" strokeWidth=".6" />)}
    {[[880, 509, "#4c4"], [886, 506, "#f66"], [919, 288, "#4c4"], [925, 319, "#f66"], [897, 319, "#4c4"], [903, 325, "#f66"]].map(([x, y, c]) => <rect key={x} x={x - 1} y={y - 1.5} width="2" height="3" fill={c} />)}
    <Dots x={154.5} ys={[239.5, 266.5, 310.5]} />
    {[["mR3 J", 338], ["R2 J", 429], ["mR2 J", 489], ["R1 J", 549], ["mR1 J", 639]].map(([t, y]) => <Txt key={t} x="1194" y={y} textAnchor="end" $c="#d80000">{t}</Txt>)}
    <Txt x="1194" y="249" textAnchor="end" $c="#e01010">R3 J</Txt><Txt x="1194" y="250" textAnchor="end" $c="#e0c800">Clo J</Txt>
    {[["mS1 J", 790], ["S1 J", 849], ["mS2 J", 940], ["S2 J", 1031]].map(([t, y]) => <Txt key={t} x="1194" y={y} textAnchor="end" $c="#00d000">{t}</Txt>)}
    <Txt x="1194" y="668" textAnchor="end" $c="#e0d800">Clo (J, Pré)</Txt><Txt x="1194" y="730" textAnchor="end" $c="#eee">Piv J</Txt>
    {[["R3", 351], ["R2", 409], ["R1", 485], ["Piv", 544], ["S1", 620], ["S2", 678], ["S3", 754]].map(([t, y]) => {
      const a = t[0] === "R" ? "#d40000" : t[0] === "P" ? "#ddd" : "#00d000";
      return <g key={t}><Txt x="977" y={y} textAnchor="end" $c={a}>{t} 2H</Txt><Txt x="1011" y={y} textAnchor="end" $c={t[0] === "S" ? "#00c8c8" : a}>{t} 4H</Txt></g>;
    })}
    {[["mR2 H", 186, "#d40000"], ["R1 H", 383, "#d40000"], ["mR1 M", 388, "#a00"], ["mR1 H", 653, "#d40000"], ["Piv M", 771, "#eee"], ["Clo (H, Pré)", 777, "#d8d000"], ["Piv H", 924, "#eee"]].map(([t, y, c]) => <Txt key={t} x="1363" y={y} textAnchor="end" $c={c}>{t}</Txt>)}
    <Txt x="4" y="1042" $c="#d00000" $s={6} fontStyle="italic">© IT-Finance.com Données indicatives</Txt>
    {[5040, 5030, 5020, 5010, 5000, 4990, 4980, 4970, 4960, 4950, 4940, 4920, 4910, 4900, 4880, 4870, 4860].map((p) => <Txt key={p} x="1367" y={my(p) + 3} $b={p % 50 === 0} $s={p % 50 ? 8 : 9}>{label(p)}</Txt>)}
    <path d="M1364.500 102V1043" stroke="#999" strokeWidth=".6" />
    <Plate x={1367} y={188.5} t="5 026,6" c="#f01010" s={10} b w={34} />
    <Plate x={1367} y={244} t="5 013,7" c="#d01010" w={29} /><Plate x={1367} y={261} t="5 012,8" c="#eee" w={29} />
    <rect x="1390" y="246" width="14" height="13" fill="#111" /><Txt x="1394" y="256.5" $s={11} $b $c="#ffe800">,3</Txt>
    <Plate x={1366} y={252.5} t="364T" c="#000" s={11} b w={27} bg="#90f090" />
    <Plate x={1367} y={381} t="4 986,0" c="#e01010" s={9} b w={34} /><Plate x={1367} y={398} t="4 984,4" c="#0d0" w={29} /><Plate x={1366} y={390} t="4 985,0" c="#f01010" s={11} b w={38} />
    {[[340.5, "4 995,2"], [431, "4 976,5"], [491, "4 964,2"], [551, "4 951,8"], [641.5, "4 933,2"]].map(([y, t]) => <Plate key={t} x={1367} y={y} t={t} c="#d01010" w={29} />)}
    <Plate x={1367} y={655.5} t="4 930,2" c="#f01010" s={10} b w={34} /><Plate x={1367} y={670.5} t="4 927,2" c="#e8e000" w={29} />
    <Plate x={1367} y={732} t="4 914,5" c="#fff" w={29} /><Plate x={1366} y={770} t="4 906,0" c="#fff" s={11} b w={38} /><Plate x={1367} y={781.5} t="4 904,8" c="#e8e000" w={29} />
    {[[792.5, "4 902,2"], [851.5, "4 889,8"], [942.5, "4 871,2"], [1033, "4 852,5"]].map(([y, t]) => <Plate key={t} x={1367} y={y} t={t} c="#00d800" w={29} />)}
    <Plate x={1367} y={926.5} t="4 874,5" c="#fff" s={10} b w={34} />
    {[[78, "17:03"], [145, "19:08"], [217, "21:04"], [261, "10", 1], [300, "03:52"], [334, "09:02"], [461, "11:01"], [522, "13:02"], [567, "15:01"], [650, "17:00"], [728, "19:15"], [767, "21:11"], [800, "11", 1], [828, "03:33"], [872, "09:00"], [978, "11:03"], [1011, "13:04"], [1045, "15:04"], [1078, "17:05"], [1111, "19:06"], [1144, "21:07"], [1194, "12", 1], [1244, "03:00"], [1278, "05:01"], [1311, "07:02"], [1344, "09:02"]].map(([x, t, b]) => (
      <g key={x}><path d={`M${x} 1043v3`} stroke="#777" /><Txt x={x} y="1054.5" textAnchor="middle" $b={b}>{t}</Txt></g>
    ))}
  </ChartSvg>
);

const VX = [1421.5, 1475.7, 1530, 1584.5, 1638.5, 1693.3, 1747.7, 1802, 1856.7];
const sy = (p) => 313 + (5000 - p) * 4.08;
const SideChart = () => (
  <ChartSvg viewBox="1409 102 508 471" preserveAspectRatio="none" role="img" aria-label="Graphique PXI 5 minutes">
    <defs><linearGradient id="bg2" x1="0" y1="0" x2="0" y2="1"><stop offset="0" stopColor="#c9c9c9" /><stop offset="1" stopColor="#a4a4a4" /></linearGradient></defs>
    <rect x="1409" y="102" width="508" height="471" fill="#fff" /><rect x="1409" y="102" width="469" height="471" fill="url(#bg2)" />
    {VX.map((x) => <path key={x} d={`M${x} 102V573`} stroke="#000" opacity=".13" />)}
    {[5050, 5040, 5030, 5020, 5010, 5000, 4990, 4980, 4970, 4960, 4950].map((p) => <g key={p}><Line x1={1409} x2={1880} y={sy(p)} c="#000" w={1} o={0.13} /><Txt x="1881" y={sy(p) + 3} $b={p % 50 === 0} $s={p % 50 ? 8 : 9}>{label(p)}</Txt></g>)}
    {[247.5, 271, 308.5].map((y) => <Line key={y} x1={1409} x2={1643} y={y} c="#888" w={1} />)}
    <Bars data={sideBars} w={3.4} up="#22a022" down="#f02828" edge />
    {[257, 333.5, 409.5, 459.5, 509.5].map((y) => <Line key={y} x1={1409} x2={1878} y={y} c={R} w={1.6} />)}
    <Line x1={1409} x2={1878} y={204.5} c={R} w={2.2} /><Line x1={1409} x2={1878} y={370.5} c={R} w={2} /><Line x1={1409} x2={1878} y={375} c={R} w={2.6} />
    {[344, 392.5, 457.3].map((y) => <Line key={y} x1={1584.5} x2={1802} y={y} c={R} w={1.2} />)}
    <Line x1={1638.5} x2={1693} y={175} c={R} w={1} d="2 2" /><Line x1={1638.5} x2={1693} y={352.5} c="#222" w={1} d="2 2" /><Line x1={1638.5} x2={1693} y={446.5} c="#393" w={1} d="2 2" />
    <Line x1={1584.5} x2={1802} y={505.5} c="#111" w={1.4} d="3 2" /><Line x1={1584.5} x2={1802} y={569.5} c="#2222e0" w={1.4} /><Line x1={1584.5} x2={1693} y={569.5} c="#1a7d1a" w={1.4} d="3 2" />
    <Line x1={1621} x2={1878} y={248.5} c="#1a801a" w={1} /><Line x1={1643} x2={1878} y={308.5} c="#1a801a" w={1} />
    <Line x1={1621} x2={1878} y={270.8} c="#3030e8" w={1.2} /><Line x1={1494} x2={1878} y={260} c="#f4ee10" w={2} d="11 3" /><Line x1={1662} x2={1878} y={258.5} c="#25c425" w={2.6} />
    <Poly c={MA} w={2.8} p={s8("384,1029 390,740 400,710")} />
    <Poly c={R} p={s8("400,710 413,710 428,722 447,747 470,763 512,787 530,803 541,808")} />
    <Poly c={MA} p={s8("541,808 555,800 580,770 592,705 608,630 648,558 670,520 710,482 742,460 784,442")} />
    {[[1584.3, 448], [1589.5, 443], [1602.7, 293], [1616.3, 278], [1620.5, 253]].map(([x, y]) => <Mark key={x} x={x} y={y} c="#ff8080" s="#e01818" />)}
    {[[1589, 483], [1602.7, 386], [1611.7, 339.5], [1620.7, 312]].map(([x, y]) => <rect key={x} x={x - 2.2} y={y - 2.2} width="4.4" height="4.4" fill="#3fc03f" stroke="#0c6c0c" strokeWidth=".6" />)}
    <Dots x={1561.3} ys={[247.5, 271, 308.5]} />
    {[["R1 1H", 1693, 173, R], ["R3 2H", 1693, 342, R], ["R3 4H", 1802, 342, R], ["Piv 1H", 1693, 350.5, "#111"], ["R2 2H", 1693, 390.5, R], ["R2 4H", 1802, 390.5, R], ["S1 1H", 1693, 444.5, "#1a7d1a"], ["R1 2H", 1693, 455, R], ["R1 4H", 1802, 455, R], ["Piv 2H", 1693, 503.5, "#111"], ["Piv 4H", 1802, 503.5, "#111"], ["S1 2H", 1693, 567.5, "#1a7d1a"], ["S1 4H", 1802, 567.5, "#2222e0"],
      ["mR2 H", 1877, 202.5, R], ["R3 J", 1877, 255, R], ["mR3 J", 1877, 331.5, R], ["R1 H", 1877, 368, R], ["mR1 M", 1877, 373, "#c22"], ["R2 J", 1877, 407.5, R], ["mR2 J", 1877, 457.5, R], ["R1 J", 1877, 507.5, R]].map(([t, x, y, c]) => <Txt key={t} x={x} y={y} textAnchor="end" $c={c}>{t}</Txt>)}
    <Txt x="1410" y="571.5" $c="#e01010" $s={6} fontStyle="italic">© IT-Finance.com Données indicatives</Txt>
    <Plate x={1880} y={205.5} t="5 026,6" c="#f01010" s={10} b w={35} bg="#939393" /><Plate x={1880} y={251} t="5 013,3" c="#3c3" w={29} bg="#999" /><Plate x={1880} y={267} t="5 012,8" c="#aaa" w={29} bg="#999" />
    <Plate x={1880} y={260} t="3m22s" c="#111" s={11} b w={36} bg="#8df08d" />
    <Plate x={1880} y={366} t="4 986,0" c="#e01010" s={9} b w={34} bg="#939393" /><Plate x={1880} y={382} t="4 984,4" c="#3d3" w={29} bg="#939393" /><Plate x={1879} y={375} t="4 985,0" c="#e80c0c" s={11} b w={38} bg="#939393" />
  </ChartSvg>
);

const RSI21 = "27,215 36,215 50,225 64,207 77,203 91,216 105,207 131,205 145,193 158,240 172,275 185,268 199,292 213,301 227,290 240,257 254,233 267,245 281,280 294,290 308,302 321,325 348,322 362,295 376,281 391,232 404,211 417,245 431,263 444,298 458,315 485,316 498,322 512,343 525,343 539,310 553,270 567,245 581,233 594,200 608,175 635,163 662,152 676,152 689,162 703,158 716,168 730,188 757,182 785,172";
const RSI14 = "36,216 50,233 64,203 77,198 91,221 105,207 131,204 145,185 158,265 172,302 185,289 199,323 213,334 227,310 240,255 254,231 267,245 281,295 294,305 308,320 321,350 335,352 348,347 362,298 376,283 391,216 404,198 417,243 431,262 444,307 458,327 471,331 485,328 498,338 512,362 525,366 539,325 553,263 567,235 581,217 594,180 608,153 635,142 662,132 676,132 689,147 703,141 716,155 730,182 757,176 785,161";
const ry = (v) => 742.7 - v * 1.61;
const RsiChart = () => (
  <ChartSvg viewBox="1409 573 508 192" preserveAspectRatio="none" role="img" aria-label="RSI">
    <defs><clipPath id="hi"><rect x="1409" y="573" width="470" height="89.2" /></clipPath><clipPath id="lo"><rect x="1409" y="662.2" width="470" height="60" /></clipPath></defs>
    <rect x="1409" y="573" width="508" height="192" fill="#fff" /><rect x="1409" y="573" width="469" height="178" fill="#9f9f9f" /><rect x="1409" y="572" width="469" height="2" fill="#d3e4ec" />
    {VX.map((x, i) => <g key={x}><path d={`M${x} 574V751`} stroke="#000" opacity=".12" />{i > 0 && <Txt x={x + 0.5} y="762" textAnchor="middle">{`${String(6 + i).padStart(2, "0")}:00`}</Txt>}</g>)}
    {[10, 20, 30, 40, 50, 60, 70, 80, 90, 100].map((v) => <g key={v}><Line x1={1409} x2={1880} y={ry(v)} c="#000" w={1} o={0.1} />{v !== 80 && <Txt x="1881" y={ry(v) + 3} $b={v % 50 === 0} $s={v % 50 ? 8 : 9}>{v}</Txt>}</g>)}
    <polygon points={r9(`27,307 ${RSI21} 787,172 787,307`)} fill="#62c862" clipPath="url(#hi)" /><polygon points={r9(`27,307 ${RSI21} 787,172 787,307`)} fill="#cf6464" clipPath="url(#lo)" />
    <Line x1={1409} x2={1878} y={582} c="#00f000" w={2} /><Line x1={1409} x2={1878} y={630} c="#22e822" w={1.2} d="4 2" /><Line x1={1409} x2={1878} y={662.5} c="#eee" w={1} d="2 2" /><Line x1={1409} x2={1878} y={694.5} c={R} w={1.4} d="4 2" /><Line x1={1409} x2={1878} y={742.5} c={R} w={2} />
    <Poly c="#222" w={1.4} p={r9(RSI21)} /><Poly c="#d8d838" w={1.2} p={r9(RSI14)} />
    {r9(RSI14).split(" ").map((p) => { const [x, y] = p.split(",").map(Number); return <rect key={p} x={x - 1.2} y={y - 1.2} width="2.4" height="2.4" fill="#e2e23a" />; })}
    <Plate x={1880} y={609} t="80,472" c="#f0f01a" s={10} b w={33} bg="#8f8f8f" /><Plate x={1880} y={621.5} t="78,307" c="#111" s={11} b w={36} bg="#8f8f8f" />
  </ChartSvg>
);

/* ---------- composed parts ---------- */
const XBtn = ({ name }) => <SmallBtn aria-label={name}><Cross /></SmallBtn>;
const STATS = [
  ["Ordres :", <><Tone $t="g">1</Tone><XBtn name="Annuler les ordres" /><span>&nbsp;/</span><b>0</b><Gears /></>],
  ["Position :", <><Tone $t="d">&nbsp;-0,5</Tone><XBtn name="Fermer la position" /><span>&nbsp;/</span><b>0</b><Gears /></>],
  ["Durée pos. :", <b>41m57s</b>],
  ["Gain latent :", <Tone $t="r">&nbsp;-1,70 pts</Tone>],
  ["Gain Jour :", <Tone $t="r">-60,50 pts</Tone>],
  ["Trades jour :", <><Tone $t="g">1</Tone>/<b>0</b>/<Tone $t="r">5</Tone></>],
];
const Title = ({ active, pin }) => (
  <TitleBar $active={active}>
    <Candles c={active ? "#fff" : undefined} /><Caret c={active ? "#fff" : "#111"} /><span>PXI</span><Info>i</Info>
    <Quote $active={active}>5 013,3 (+1,83%)</Quote>
    <span><b>10:26:36</b> France 40 Cash (1€)</span>
    <Spacer />
    <WinCtl><Keyboard />{pin && <Pin />}<Mini /><Maxi /><XLine /></WinCtl>
  </TitleBar>
);
const TradePanel = ({ id }) => (
  <Trade>
    <TradeFold><Caret r={-90} /></TradeFold>
    <TCol $w={11}><FaceBtn $w={11} $h={15} aria-label="Réglages"><Wrench /></FaceBtn><TLabel /></TCol>
    <TCol $w={36}><TLabel as="label" htmlFor={`${id}q`}>Qté</TLabel><QtyInput id={`${id}q`} defaultValue="0.5" /></TCol>
    <TCol $w={22}><TLabel>Limite</TLabel><FaceBtn $w={19} $h={20} aria-label="Limite"><OrderIcon /></FaceBtn></TCol>
    <TCol $w={20}><TLabel>Stop</TLabel><FaceBtn $w={19} $h={20} aria-label="Stop"><OrderIcon flip /></FaceBtn></TCol>
    <TCol $w={48}><TLabel>Vente O.F.<Info>i</Info></TLabel><PriceBtn $sell><small>5 0</small>12,<sup>8</sup></PriceBtn></TCol>
    <TCol $w={48}><TLabel>Achat O.F.<Info>i</Info></TLabel><PriceBtn><small>5 0</small>13,<sup>8</sup></PriceBtn></TCol>
    <TOptions>
      <TOpt $dim><Check type="checkbox" id={`${id}s`} defaultChecked /><label htmlFor={`${id}s`}>Sg</label><Pts $w={12} aria-label="Stop en points" defaultValue="50" />pts</TOpt>
      <TOpt><Check type="checkbox" id={`${id}l`} /><label htmlFor={`${id}l`}>L</label><Pts $w={8} $dim aria-label="Limite en points" defaultValue="6" />pts</TOpt>
    </TOptions>
  </Trade>
);
const Drop = ({ w, name, v }) => <Pick $w={w}><select aria-label={name}><option>{v}</option></select><PickArrow><Caret /></PickArrow></Pick>;
const Num = ({ w, name, v }) => <NumBox $w={w}><input aria-label={name} defaultValue={v} /><Spinner /></NumBox>;
const Bottom = ({ h, thumb }) => (
  <BottomBar $h={h}>
    <Share><ShareIcon />Partager</Share><ChainIcon /><ReportIcon /><BookIcon />
    <Scroll><ScrollBtn aria-label="Reculer"><Caret r={90} /></ScrollBtn><Thumb $w={thumb} /><ScrollBtn aria-label="Avancer"><Caret r={-90} /></ScrollBtn></Scroll>
    <WrenchChart /><LensFit /><Lens sign="-" /><Lens sign="+" />
  </BottomBar>
);
const Tags = ({ dark, ys }) => (
  <>
    <Tag $y={ys[0]}><TagMain $dark={dark}><UpDown />A:STPg 0,5@5 016,1</TagMain><TagSide $dark={dark} $c="#c8141c">-5,7 pts</TagSide><TagX $dark={dark} aria-label="Annuler STPg"><Cross c={dark ? "#ddd" : "#bbb"} /></TagX></Tag>
    <Tag $y={ys[1]}><TagMain $red $dark={dark}><span><b>-0,5</b>@<b>5 010,4</b>(RL)</span></TagMain><TagX $dark={dark} aria-label="Fermer"><Cross c="#dc2a2e" /></TagX></Tag>
    <Tag $y={ys[2]}><TagSide $dark={dark} $c="#c8141c"><b>-3,4</b></TagSide><TagSide $dark={dark} $c="#c8141c"><b>-3,4</b> pts</TagSide></Tag>
    <Tag $y={ys[3]}><TagMain $dark={dark}><UpDown />A:LMT 0,5@5 001,3</TagMain><TagSide $dark={dark} $c="#259a2a">9,1 pts</TagSide><TagX $dark={dark} aria-label="Annuler LMT"><Cross c="#dc2a2e" /></TagX></Tag>
  </>
);

export default function App() {
  return (
    <Shell>
      <Global />
      <MenuBar>
        <Candles />
        {["Fichier", "Affichage", "Trading", "Objets", "Options", "Aide"].map((m) => <MenuItem key={m}>{m}</MenuItem>)}
        <Spacer /><span>DAX</span><Brand><span>ProRealTime</span>Complete</Brand><Pin c="#5a7482" /><Mini c="#5a7482" /><XLine c="#5a7482" />
      </MenuBar>
      <ToolBar>
        <Search><input placeholder="Recherche ..." aria-label="Recherche" /><svg width="12" height="12" viewBox="0 0 12 12"><circle cx="7" cy="4.5" r="3.3" fill="none" stroke="#333" /><path d="M4.500 7L1 11" stroke="#333" strokeWidth="1.6" /></svg></Search>
        <Tool aria-label="Nouveau graphique"><svg width="16" height="16" viewBox="0 0 16 16"><rect x="1" y="1" width="11" height="9" fill="#fff" stroke="#2a6fd0" /><path d="M1 2.500h11" stroke="#2a6fd0" strokeWidth="2" /><rect x="4" y="6" width="11" height="9" fill="#fff" stroke="#2a6fd0" /><path d="M4 7h11" stroke="#2a6fd0" strokeWidth="2" /><path d="M5 13l3-3 2 2 4-4" stroke="#18a" fill="none" /></svg></Tool>
        <Tool aria-label="Carnet d'ordres"><BookIcon /></Tool><ToolSep />
        {TOOLS.map(([n, g], i) => <Tool key={n} $on={i === 0} aria-label={n}><svg width="16" height="16" viewBox="0 0 16 16">{g}</svg></Tool>)}
        <Palette>{COLORS.map((c) => <Swatch key={c} $c={c} aria-label={`Couleur ${c}`} />)}</Palette>
        <Spacer />
        <TopAction $c="#3fc846">Push+<Candles /></TopAction>
        <TopAction $c="#7fdf85">DealThru<svg width="10" height="14" viewBox="0 0 10 14"><path d="M4 11C5 9 3 4 8 2M4.500 3.500L8 1.500L9.500 4" stroke="#c22a2a" strokeWidth="1.8" fill="none" /><path d="M1 9l1.500 3.500L6 10.500" stroke="#186818" strokeWidth="1.6" fill="none" /></svg></TopAction>
      </ToolBar>
      <Workspace>
        <Win>
          <Title />
          <StatusRow $wide>{STATS.map(([l, v]) => <Stat key={l}>{l} {v}</Stat>)}</StatusRow>
          <Controls>
            <Pickers $pad={188}>
              <Group><Num w={54} name="Nombre d'unités" v="500" /><Drop w={62} name="Unités" v="(x) unités" /></Group>
              <Group><Num w={54} name="Nombre de ticks" v="500" /><Drop w={62} name="Ticks" v="(x) ticks" /></Group>
              <IndBtn aria-label="Indicateurs"><Indicator /><Caret /></IndBtn>
            </Pickers>
            <TradePanel id="a" />
          </Controls>
          <ChartArea $f={1}>
            <MainChart />
            <Legend>Prix<Wrench /><ArrowBox c="#e02020" r={180} /><ArrowBox c="#18a018" r={0} /><LegendNote $c="#d00c0c">Jour :+Haut 5 015,3 +Bas 4 921,5</LegendNote></Legend>
            <Tags dark ys={[124, 152, 165, 195]} />
          </ChartArea>
          <Bottom h={24} thumb="22%" />
        </Win>
        <Column>
          <Win $grow>
            <Title />
            <StatusRow>{STATS.map(([l, v]) => <Stat key={l}>{l} {v}</Stat>)}</StatusRow>
            <Controls>
              <Pickers $pad={20}>
                <Drop w={61} name="Unités" v="100 unités" /><Drop w={61} name="Période" v="5 minutes" />
                <IndBtn aria-label="Indicateurs"><Indicator /><Caret /></IndBtn>
              </Pickers>
              <TradePanel id="b" />
            </Controls>
            <ChartArea $f={471}>
              <SideChart />
              <Legend>Prix<Wrench /><Box /><CloseDot /><ArrowBox c="#e02020" r={180} /><ArrowBox c="#18a018" r={0} /><LegendNote $c="#ee1414">Jour :+Haut 5 015,3 +Bas 4 921,5</LegendNote></Legend>
              <Tags ys={[131, 157, 170, 193]} />
            </ChartArea>
            <ChartArea $f={192}>
              <RsiChart />
              <Legend>Relative strength index (RSI) (21) Relative strength index (RSI) (14)<Wrench /><Box /><CloseDot /></Legend>
            </ChartArea>
            <Bottom h={22} thumb="44px" />
          </Win>
          <Win $active>
            <Title active pin />
            <OrderTop>
              <StatList>
                {[3, 4, 5, 0, 1, 2].map((i) => <React.Fragment key={i}><span>{STATS[i][0]}</span><Stat>{STATS[i][1]}</Stat></React.Fragment>)}
              </StatList>
              <QtyPane>
                <label htmlFor="bigq">Qté</label><BigQty id="bigq" defaultValue="0.5" />
                <LimitRow>
                  <Check type="checkbox" id="os" defaultChecked /><OptLabel $dim htmlFor="os">Stop (G)</OptLabel><Pts $w={13} aria-label="Stop points" defaultValue="50" /><span>pts&nbsp;&nbsp;</span>
                  <Check type="checkbox" id="ol" /><OptLabel htmlFor="ol">Limite</OptLabel><Pts $w={8} $dim aria-label="Limite points" defaultValue="6" />pts
                </LimitRow>
                <Rule $m={6} />
                <StepRow><Num w={30} name="Ticks du stop" v="1" /><Num w={30} name="Ticks de la limite" v="1" /></StepRow>
              </QtyPane>
              <Pending>
                <PendRow><Cross s={11} c="#dba3a6" /><small>STP (G)</small>+0,5@5 016,1</PendRow>
                <Rule $m={0} />
                <PendRow><Cross s={11} c="#d8383c" /><small>LMT</small>+0,5@5 001,3</PendRow>
              </Pending>
            </OrderTop>
            <DealRow>
              <Deal $sell><DealHead>Vente O.F. 0,5<Info>i</Info></DealHead><DealPrice>5 012,8</DealPrice><span>+ Stop (G) 50</span></Deal>
              <Mid>
                <Ticks><TickBtn>Stop à 1 ticks</TickBtn><TickBtn>Limite à 1 ticks</TickBtn></Ticks>
                <Exit>Sortir<strong>-1,70 pts</strong><em><small>Qté</small>-0,5</em></Exit>
              </Mid>
              <Deal><DealHead>Achat O.F. 0,5<Info>i</Info></DealHead><DealPrice>5 013,8</DealPrice><span>+ Stop (G) 50</span></Deal>
            </DealRow>
            <Actions>
              <Action aria-label="Affichage"><svg width="15" height="13" viewBox="0 0 15 13"><rect x=".5" y=".5" width="14" height="10" fill="#fff" stroke="#444" /><path d="M1 4h5v3H1z" fill="#d55" /><path d="M10 4h4v3h-4z" fill="#3b3" /><path d="M5.500 0v11M10 0v11M0 4h15M0 7h15" stroke="#444" strokeWidth=".8" /><path d="M10 10h5l-2.500 3z" fill="#111" /></svg></Action>
              <Action>Inverser position</Action><Action>Annuler les 1 ordres en attente</Action>
              <ActIcons>
                <svg width="14" height="12" viewBox="0 0 14 12"><rect width="14" height="12" fill="#f4fff4" stroke="#9b9" strokeWidth=".5" /><path d="M0 2h14" stroke="#e77" strokeWidth="1.5" /><path d="M2 7l3 2 3-4 4-1" stroke="#1a9a2a" strokeWidth="1.4" fill="none" /><path d="M0 11h14" stroke="#3c3" strokeWidth="1.5" /></svg>
                <ChainIcon /><WrenchChart />
              </ActIcons>
            </Actions>
            <Grid>
              <colgroup><Col $w="14px" /><Col $w="32%" /><Col $w="35%" /><col /></colgroup>
              <thead><tr><th aria-label="Outils"><Tools><svg width="11" height="10" viewBox="0 0 11 10"><rect width="10" height="9" fill="#cfe0ee" /><path d="M2 2l6 5M8 2L2 7" stroke="#41678f" strokeWidth="1.5" /></svg><Wrench c="#cfe0ee" s={10} /></Tools></th><th>Qté</th><th>Prix de revient unitaire</th><th aria-label="Sens"><TitleIcon><Arrow c="#dfe9f1" /></TitleIcon></th></tr></thead>
              <tbody><tr><td><Tools><XBtn name="Fermer la ligne" /></Tools></td><td><Tone as="span" $t="d">-0,5</Tone></td><td><Tone as="span" $t="g">5 010,4</Tone></td><td>1</td></tr></tbody>
            </Grid>
            <Foot><Stat>Offre <Arrow c="#2d8fd8" r={90} /><b>0</b></Stat><Stat>Spread: 1,0</Stat><Stat><b>0</b><Arrow c="#2d8fd8" r={-90} /> Demande</Stat></Foot>
          </Win>
        </Column>
      </Workspace>
    </Shell>
  );
}
